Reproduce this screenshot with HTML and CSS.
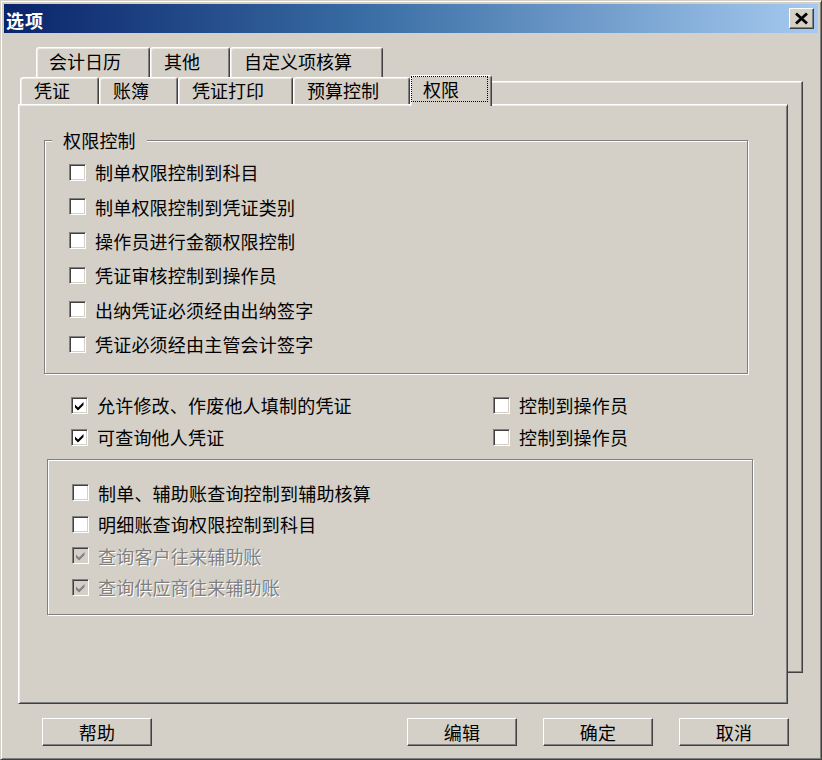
FILE: index.html
```html
<!DOCTYPE html>
<html lang="zh-CN">
<head>
<meta charset="utf-8">
<title>选项</title>
<link rel="stylesheet" href="styles.css">
</head>
<body>
<div class="window">
  <div class="titlebar">
    <span class="title">选项</span>
    <button class="close" type="button" aria-label="关闭">
      <svg width="23" height="19" viewBox="0 0 23 19"><path d="M6 4.5 L17 14.5 M17 4.5 L6 14.5" stroke="#000" stroke-width="2.8" fill="none"/></svg>
    </button>
  </div>
  <div class="client">
    <div class="tabctl">
      <div class="tabrow back-row">
        <div class="tab tab-narrow">会计日历</div>
        <div class="tab tab-mid">其他</div>
        <div class="tab tab-wide">自定义项核算</div>
      </div>
      <div class="stack">
        <div class="back-page"></div>
        <div class="front">
          <div class="tabrow front-row">
            <div class="tab">凭证</div>
            <div class="tab">账簿</div>
            <div class="tab">凭证打印</div>
            <div class="tab tab-wide">预算控制</div>
            <div class="tab selected"><span class="focus">权限</span></div>
          </div>
          <div class="page">
            <div class="group group-perm">
              <div class="group-title">权限控制</div>
              <div class="rows rows-perm">
                <label class="cb"><span class="box"></span><span class="lbl">制单权限控制到科目</span></label>
                <label class="cb"><span class="box"></span><span class="lbl">制单权限控制到凭证类别</span></label>
                <label class="cb"><span class="box"></span><span class="lbl">操作员进行金额权限控制</span></label>
                <label class="cb"><span class="box"></span><span class="lbl">凭证审核控制到操作员</span></label>
                <label class="cb"><span class="box"></span><span class="lbl">出纳凭证必须经由出纳签字</span></label>
                <label class="cb"><span class="box"></span><span class="lbl">凭证必须经由主管会计签字</span></label>
              </div>
            </div>
            <div class="mid">
              <label class="cb"><span class="box"><svg class="check" width="15" height="15" viewBox="0 0 15 15"><path d="M3 6.5 L6 9.5 L11.5 4 L11.5 7 L6 12.5 L3 9.5 Z"/></svg></span><span class="lbl">允许修改、作废他人填制的凭证</span></label>
              <label class="cb"><span class="box"></span><span class="lbl">控制到操作员</span></label>
              <label class="cb"><span class="box"><svg class="check" width="15" height="15" viewBox="0 0 15 15"><path d="M3 6.5 L6 9.5 L11.5 4 L11.5 7 L6 12.5 L3 9.5 Z"/></svg></span><span class="lbl">可查询他人凭证</span></label>
              <label class="cb"><span class="box"></span><span class="lbl">控制到操作员</span></label>
            </div>
            <div class="group group-aux">
              <div class="rows rows-aux">
                <label class="cb"><span class="box"></span><span class="lbl">制单、辅助账查询控制到辅助核算</span></label>
                <label class="cb"><span class="box"></span><span class="lbl">明细账查询权限控制到科目</span></label>
                <label class="cb disabled"><span class="box"><svg class="check" width="15" height="15" viewBox="0 0 15 15"><path d="M3 6.5 L6 9.5 L11.5 4 L11.5 7 L6 12.5 L3 9.5 Z"/></svg></span><span class="lbl">查询客户往来辅助账</span></label>
                <label class="cb disabled"><span class="box"><svg class="check" width="15" height="15" viewBox="0 0 15 15"><path d="M3 6.5 L6 9.5 L11.5 4 L11.5 7 L6 12.5 L3 9.5 Z"/></svg></span><span class="lbl">查询供应商往来辅助账</span></label>
              </div>
            </div>
          </div>
        </div>
      </div>
    </div>
    <div class="buttons">
      <button class="btn" type="button">帮助</button>
      <div class="btn-group">
        <button class="btn" type="button">编辑</button>
        <button class="btn" type="button">确定</button>
        <button class="btn" type="button">取消</button>
      </div>
    </div>
  </div>
</div>
</body>
</html>
```
FILE: styles.css
```css
* { box-sizing: border-box; }
html, body { margin: 0; padding: 0; }
body {
  width: 822px;
  height: 760px;
  overflow: hidden;
  background: #d4d0c8;
  font-family: "Noto Sans CJK SC", "Noto Sans", sans-serif;
  font-size: 18px;
  letter-spacing: 0.2px;
  color: #000;
}

.window {
  width: 822px;
  height: 760px;
  background: #d4d0c8;
  border: 1px solid;
  border-color: #d4d0c8 #404040 #404040 #d4d0c8;
  box-shadow: inset 1px 1px 0 #fff, inset -1px -1px 0 #808080;
  padding: 3px;
  display: flex;
  flex-direction: column;
}

/* title bar */
.titlebar {
  height: 29px;
  flex: none;
  display: flex;
  align-items: flex-start;
  padding: 0 4px 0 2px;
  background: linear-gradient(to right, #0a246a 0%, #3a6ea5 45%, #a6caf0 100%);
}
.title {
  color: #fff;
  font-weight: bold;
  font-size: 18px;
  letter-spacing: 1px;
  line-height: 25px;
  padding-top: 4px;
}
.close {
  margin: 4px 0 0 auto;
  width: 25px;
  height: 21px;
  padding: 0;
  background: #d4d0c8;
  border: 1px solid;
  border-color: #fff #404040 #404040 #fff;
  box-shadow: inset -1px -1px 0 #808080;
  display: flex;
  align-items: center;
  justify-content: center;
}
.close svg { display: block; }

.client {
  flex: 1;
  display: flex;
  flex-direction: column;
}

/* tab control */
.tabctl { margin: 14px 0 0 14px; }
.tabrow {
  display: flex;
  align-items: flex-end;
}
.tab {
  background: #d4d0c8;
  border: 1px solid #fff;
  border-right-color: #404040;
  border-bottom: none;
  border-radius: 3px 3px 0 0;
  box-shadow: inset 1px 1px 0 #ecebe6, inset -1px 0 0 #808080;
  padding: 0 28px 0 13px;
  letter-spacing: 0;
  white-space: nowrap;
}
.tab.tab-narrow { padding: 0 28px 0 12px; }
.tab.tab-mid { padding-right: 29px; }
.tab.tab-wide { padding-right: 30px; }
.back-row {
  height: 30px;
  margin: 0 0 -2px 18px;
}
.back-row .tab {
  height: 30px;
  line-height: 26px;
}
.stack {
  display: grid;
  width: 785px;
  height: 629px;
}
.back-page, .front { grid-area: 1 / 1; }
.back-page {
  margin: 6px 0 31px 15px;
  background: #d4d0c8;
  border-top: 1px solid #fff;
  border-right: 1px solid #404040;
  border-bottom: 1px solid #404040;
  box-shadow: inset -1px -1px 0 #808080, inset 0 1px 0 #ecebe6;
}
.front {
  margin-right: 15px;
  display: flex;
  flex-direction: column;
}
.front-row {
  height: 29px;
  flex: none;
  padding-left: 2px;
}
.front-row .tab {
  height: 27px;
  line-height: 25px;
}
.front-row .tab.selected {
  position: relative;
  z-index: 1;
  width: 82px;
  height: 31px;
  margin-bottom: -2px;
  padding: 0 3px 4px 0;
}
.focus {
  display: block;
  height: 26px;
  border: 1px dotted #000;
  line-height: 24px;
  padding-left: 11px;
}

.page {
  flex: 1;
  background: #d4d0c8;
  border: 1px solid;
  border-color: #fff #404040 #404040 #fff;
  box-shadow: inset 1px 1px 0 #ecebe6, inset -1px -1px 0 #808080;
  padding: 1px;
}

/* group boxes */
.group {
  border: 1px solid #808080;
  box-shadow: 1px 1px 0 #fff, inset 1px 1px 0 #fff;
  display: flex;
  flex-direction: column;
  align-items: flex-start;
}
.group-title {
  margin: -11px 0 0 7px;
  padding: 0 11px;
  line-height: 20px;
  background: #d4d0c8;
}
.group-perm {
  margin: 34px 0 0 24px;
  width: 704px;
  height: 234px;
}
.rows { display: flex; flex-direction: column; }
.rows-perm {
  margin-top: 5px;
  padding-left: 24px;
}
.rows-perm .cb { height: 34.4px; }

.mid {
  display: grid;
  grid-template-columns: 422px auto;
  grid-auto-rows: 32px;
  margin: 15px 0 0 51px;
}

.group-aux {
  margin: 6px 0 0 27px;
  width: 706px;
  height: 156px;
  padding: 17px 0 0 24px;
}
.rows-aux .cb { height: 31.5px; }

/* checkboxes */
.cb {
  display: flex;
  align-items: center;
  white-space: nowrap;
}
.box {
  flex: none;
  width: 17px;
  height: 17px;
  margin-right: 9px;
  background: #fff;
  border: 1px solid;
  border-color: #808080 #fff #fff #808080;
  box-shadow: inset 1px 1px 0 #404040, inset -1px -1px 0 #d4d0c8;
}
.check { display: block; fill: #000; }
.cb.disabled .box { background: #d4d0c8; }
.cb.disabled .check { fill: #808080; }
.cb.disabled .lbl {
  color: #808080;
  text-shadow: 1px 1px 0 #fff;
}

/* buttons */
.buttons {
  display: flex;
  margin-top: 14px;
  padding: 0 29px 0 38px;
}
.btn-group {
  display: flex;
  gap: 26px;
  margin-left: auto;
}
.btn {
  width: 110px;
  height: 28px;
  padding: 0;
  background: #d4d0c8;
  border: 1px solid;
  border-color: #fff #404040 #404040 #fff;
  box-shadow: inset -1px -1px 0 #808080;
  font: inherit;
  letter-spacing: inherit;
  line-height: 26px;
  color: #000;
  text-align: center;
}
```
